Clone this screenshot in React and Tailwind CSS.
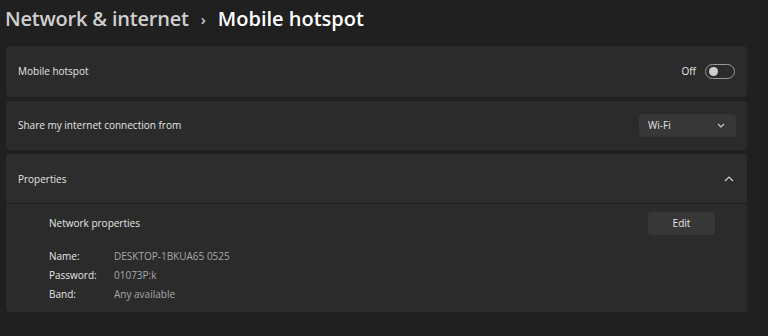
export default function App() {
  return (
    <div
      className="w-[768px] h-[336px] bg-[#202020] overflow-hidden text-white"
      style={{ fontFamily: '"Open Sans", "Noto Sans", sans-serif' }}
    >
      {/* Breadcrumb title */}
      <div className="h-[46px] pl-[5px] flex items-center pb-[8px] text-[20px] font-semibold">
        <span className="text-[#cfcfcf] tracking-[-0.2px]">Network &amp; internet</span>
        <span className="mx-[12px] text-[#cfcfcf] text-[15px]">›</span>
        <span className="text-white">Mobile hotspot</span>
      </div>

      <div className="pl-[6px] pr-[21px] flex flex-col gap-[4px] text-[10px]">
        {/* Mobile hotspot toggle */}
        <div className="h-[51px] bg-[#2b2b2b] rounded-[4px] flex items-center justify-between pl-[12px] pr-[12px]">
          <span className="text-[#e6e6e6]">Mobile hotspot</span>
          <div className="flex items-center gap-[9px]">
            <span className="text-[#e6e6e6]">Off</span>
            <div className="w-[30px] h-[15px] rounded-full border border-[#9a9a9a] flex items-center pl-[3px]">
              <div className="w-[9px] h-[9px] rounded-full bg-[#d0d0d0]" />
            </div>
          </div>
        </div>

        {/* Share connection */}
        <div className="h-[49px] bg-[#2b2b2b] rounded-[4px] flex items-center justify-between pl-[12px] pr-[11px]">
          <span className="text-[#e6e6e6]">Share my internet connection from</span>
          <div className="w-[97px] h-[23px] bg-[#373737] rounded-[4px] flex items-center justify-between pl-[9px] pr-[11px]">
            <span className="text-[#e6e6e6]">Wi-Fi</span>
            <svg width="8" height="5" viewBox="0 0 8 5" fill="none">
              <path d="M1 1l3 3 3-3" stroke="#cfcfcf" strokeWidth="1.1" />
            </svg>
          </div>
        </div>

        {/* Properties */}
        <div className="bg-[#2b2b2b] rounded-[4px] overflow-hidden">
          <div className="h-[50px] bg-[#2d2d2d] flex items-center justify-between pl-[12px] pr-[13px] border-b border-[#1f1f1f]">
            <span className="text-[#e6e6e6] pt-[2px]">Properties</span>
            <svg width="10" height="6" viewBox="0 0 10 6" fill="none">
              <path d="M1 5l4-4 4 4" stroke="#d0d0d0" strokeWidth="1.2" />
            </svg>
          </div>
          <div className="h-[108px] pl-[43px] pr-[32px] pt-[8px]">
            <div className="flex items-center justify-between">
              <span className="text-[#e6e6e6]">Network properties</span>
              <div className="w-[67px] h-[23px] bg-[#373737] rounded-[4px] flex items-center justify-center text-[#e6e6e6]">
                Edit
              </div>
            </div>
            <div className="mt-[13px] grid grid-cols-[65px_1fr] gap-y-[3px] leading-[16px]">
              <span className="text-[#e6e6e6]">Name:</span>
              <span className="text-[#a8a8a8]">DESKTOP-1BKUA65 0525</span>
              <span className="text-[#e6e6e6]">Password:</span>
              <span className="text-[#a8a8a8]">01073P:k</span>
              <span className="text-[#e6e6e6]">Band:</span>
              <span className="text-[#a8a8a8]">Any available</span>
            </div>
          </div>
        </div>
      </div>
    </div>
  );
}
